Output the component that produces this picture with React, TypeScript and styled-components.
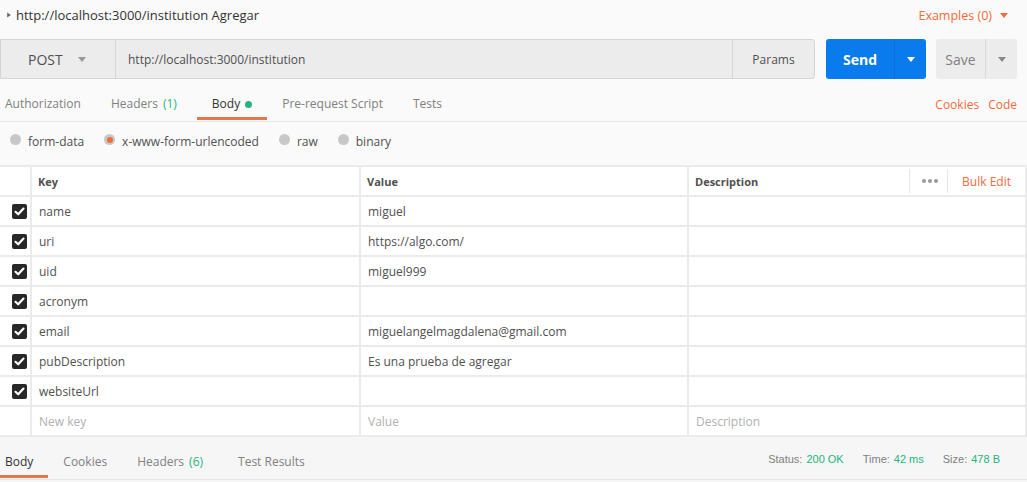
import { FC, Fragment } from "react";
import styled, { createGlobalStyle } from "styled-components";

const GlobalStyle = createGlobalStyle`
  body {
    margin: 0;
    background: #fafafa;
    font-family: "Open Sans", "Liberation Sans", sans-serif;
    color: #505050;
  }
`;

const ORANGE = "#f26b3a";
const GREEN = "#26b47f";

const Page = styled.div`
  width: 1027px;
  height: 482px;
  overflow: hidden;
  background: #fafafa;
`;

const TitleRow = styled.div`
  height: 30px;
  display: flex;
  align-items: center;
  justify-content: space-between;
  padding: 0 18px 0 6px;
`;

const Title = styled.div`
  display: flex;
  align-items: center;
  gap: 4px;
  font-size: 13px;
  color: #333;
`;

const Caret: FC<{ dir?: "right" | "down"; color: string; size?: number }> = ({
  dir = "down",
  color,
  size = 5,
}) => (
  <svg width={size * 2} height={size * 2} viewBox="0 0 10 10">
    {dir === "down" ? (
      <path d="M1 3 L9 3 L5 8 Z" fill={color} />
    ) : (
      <path d="M2 1 L8 5 L2 9 Z" fill={color} />
    )}
  </svg>
);

const Examples = styled.div`
  display: flex;
  align-items: center;
  gap: 7px;
  font-size: 12.5px;
  color: ${ORANGE};
`;

const UrlRow = styled.div`
  margin-top: 9px;
  height: 40px;
  display: flex;
  align-items: stretch;
  padding-right: 10px;
`;

const UrlGroup = styled.div`
  display: flex;
  width: 815px;
  border: 1px solid #d4d4d4;
  border-radius: 0 3px 3px 0;
  background: #ececec;
  box-sizing: border-box;
`;

const Method = styled.div`
  width: 115px;
  display: flex;
  align-items: center;
  gap: 14px;
  padding-left: 27px;
  box-sizing: border-box;
  border-right: 1px solid #d4d4d4;
  font-size: 14px;
  color: #505050;
`;

const UrlInput = styled.div`
  flex: 1;
  display: flex;
  align-items: center;
  padding-left: 12px;
  font-size: 12px;
  color: #505050;
`;

const Params = styled.div`
  width: 81px;
  display: flex;
  align-items: center;
  justify-content: center;
  border-left: 1px solid #d4d4d4;
  font-size: 12px;
  color: #505050;
`;

const SplitButton = styled.div<{ $primary?: boolean }>`
  margin-left: ${(p) => (p.$primary ? "11px" : "10px")};
  width: ${(p) => (p.$primary ? "100px" : "81px")};
  display: flex;
  border-radius: 3px;
  background: ${(p) => (p.$primary ? "#097bed" : "#ececec")};
  color: ${(p) => (p.$primary ? "#fff" : "#808080")};
  font-size: 14px;
  font-weight: ${(p) => (p.$primary ? 700 : 400)};
`;

const SplitMain = styled.div<{ $primary?: boolean }>`
  flex: 1;
  display: flex;
  align-items: center;
  justify-content: center;
  border-right: 1px solid ${(p) => (p.$primary ? "#0a6fd6" : "#d8d8d8")};
`;

const SplitCaret = styled.div`
  width: 31px;
  display: flex;
  align-items: center;
  justify-content: center;
`;

const Tabs = styled.div`
  height: 43px;
  box-sizing: border-box;
  display: flex;
  align-items: stretch;
  justify-content: space-between;
  border-bottom: 1px solid #e6e6e6;
  padding-right: 10px;
`;

const TabList = styled.div`
  display: flex;
  align-items: stretch;
`;

const Tab = styled.div<{ $active?: boolean; $first?: boolean; $wide?: boolean }>`
  position: relative;
  display: flex;
  align-items: flex-start;
  gap: 5px;
  padding: 16px ${(p) => (p.$wide ? 20 : 15)}px 0 ${(p) => (p.$first ? 5 : 15)}px;
  font-size: 12px;
  line-height: 17px;
  color: ${(p) => (p.$active ? "#333" : "#808080")};
  &::after {
    content: "";
    display: ${(p) => (p.$active ? "block" : "none")};
    position: absolute;
    left: 0;
    right: 0;
    bottom: 1px;
    height: 3px;
    background: #e5764a;
  }
`;

const Count = styled.span`
  color: ${GREEN};
  margin-left: 5px;
`;

const Dot = styled.span`
  width: 7px;
  height: 7px;
  border-radius: 50%;
  background: ${GREEN};
  margin-top: 6px;
`;

const Links = styled.div`
  display: flex;
  align-items: center;
  padding-top: 9px;
  gap: 9px;
  font-size: 12px;
  color: ${ORANGE};
`;

const RadioRow = styled.div`
  height: 43px;
  box-sizing: border-box;
  display: flex;
  align-items: center;
  padding: 0 0 4px 10px;
  gap: 20px;
`;

const Radio = styled.label`
  display: flex;
  align-items: center;
  gap: 7px;
  font-size: 12px;
  color: #505050;
`;

const RadioDot = styled.span<{ $on?: boolean }>`
  width: 11px;
  height: 11px;
  border-radius: 50%;
  background: #c8c8c8;
  display: flex;
  align-items: center;
  justify-content: center;
  margin-top: -4px;
  &::after {
    content: "";
    display: ${(p) => (p.$on ? "block" : "none")};
    width: 6px;
    height: 6px;
    border-radius: 50%;
    background: ${ORANGE};
  }
`;

const Table = styled.div`
  display: grid;
  grid-template-columns: 30px 327px 326px 1fr;
  grid-auto-rows: 28px;
  gap: 2px;
  padding: 2px 2px 2px 0;
  background: #ebebeb;
`;

const Cell = styled.div<{ $head?: boolean; $placeholder?: boolean }>`
  background: #fff;
  display: flex;
  align-items: center;
  padding-left: ${(p) => (p.$head ? "6px" : "7px")};
  font-size: ${(p) => (p.$head ? "11px" : "12px")};
  font-weight: ${(p) => (p.$head ? 700 : 400)};
  color: ${(p) => (p.$placeholder ? "#b0b0b0" : "#505050")};
`;

const CheckCell = styled.div`
  background: #fff;
  display: flex;
  align-items: center;
  justify-content: flex-end;
  padding-right: 3px;
`;

const DescHead = styled(Cell)`
  padding-right: 14px;
  justify-content: space-between;
`;

const HeadTools = styled.div`
  display: flex;
  align-items: stretch;
  height: 24px;
  font-weight: 400;
`;

const More = styled.div`
  display: flex;
  align-items: center;
  gap: 2px;
  padding: 0 9px 0 12px;
  border-left: 1px solid #e6e6e6;
  border-right: 1px solid #e6e6e6;
`;

const MoreDot = styled.span`
  width: 4px;
  height: 4px;
  border-radius: 50%;
  background: #999;
`;

const BulkEdit = styled.div`
  display: flex;
  align-items: center;
  padding-left: 14px;
  color: ${ORANGE};
  font-size: 12px;
`;

const Check: FC = () => (
  <svg width="15" height="15" viewBox="0 0 15 15">
    <rect x="0" y="0" width="15" height="15" rx="2" fill="#282828" />
    <path
      d="M3.5 7.8 L6.2 10.3 L11.5 4.6"
      stroke="#fff"
      strokeWidth="2.2"
      fill="none"
      strokeLinecap="round"
      strokeLinejoin="round"
    />
  </svg>
);

const Response = styled.div`
  background: #f6f6f6;
  height: 45px;
`;

const Stats = styled.div`
  display: flex;
  align-items: center;
  padding: 2px 17px 0 0;
  gap: 19px;
  font-family: "Liberation Sans", Arial, sans-serif;
  font-size: 11px;
  color: #808080;
`;

const Stat = styled.span`
  & b {
    font-weight: 400;
    color: ${GREEN};
    margin-left: 4px;
  }
`;

const rows: [string, string][] = [
  ["name", "miguel"],
  ["uri", "https://algo.com/"],
  ["uid", "miguel999"],
  ["acronym", ""],
  ["email", "miguelangelmagdalena@gmail.com"],
  ["pubDescription", "Es una prueba de agregar"],
  ["websiteUrl", ""],
];

const App = () => {
  return (
    <Page>
      <GlobalStyle />
      <TitleRow>
        <Title>
          <Caret dir="right" color="#666" size={3} />
          http://localhost:3000/institution Agregar
        </Title>
        <Examples>
          Examples (0)
          <Caret color={ORANGE} size={5} />
        </Examples>
      </TitleRow>

      <UrlRow>
        <UrlGroup>
          <Method>
            POST
            <Caret color="#999" size={5} />
          </Method>
          <UrlInput>http://localhost:3000/institution</UrlInput>
          <Params>Params</Params>
        </UrlGroup>
        <SplitButton $primary>
          <SplitMain $primary>Send</SplitMain>
          <SplitCaret>
            <Caret color="#fff" size={5} />
          </SplitCaret>
        </SplitButton>
        <SplitButton>
          <SplitMain>Save</SplitMain>
          <SplitCaret>
            <Caret color="#888" size={5} />
          </SplitCaret>
        </SplitButton>
      </UrlRow>

      <Tabs>
        <TabList>
          <Tab $first>Authorization</Tab>
          <Tab $wide>
            <span>
              Headers<Count>(1)</Count>
            </span>
          </Tab>
          <Tab $active>
            Body <Dot />
          </Tab>
          <Tab>Pre-request Script</Tab>
          <Tab>Tests</Tab>
        </TabList>
        <Links>
          <span>Cookies</span>
          <span>Code</span>
        </Links>
      </Tabs>

      <RadioRow>
        <Radio>
          <RadioDot /> form-data
        </Radio>
        <Radio>
          <RadioDot $on /> x-www-form-urlencoded
        </Radio>
        <Radio>
          <RadioDot /> raw
        </Radio>
        <Radio>
          <RadioDot /> binary
        </Radio>
      </RadioRow>

      <Table>
        <CheckCell />
        <Cell $head>Key</Cell>
        <Cell $head>Value</Cell>
        <DescHead $head>
          Description
          <HeadTools>
            <More>
              <MoreDot />
              <MoreDot />
              <MoreDot />
            </More>
            <BulkEdit>Bulk Edit</BulkEdit>
          </HeadTools>
        </DescHead>
        {rows.map(([k, v]) => (
          <Fragment key={k}>
            <CheckCell>
              <Check />
            </CheckCell>
            <Cell>{k}</Cell>
            <Cell>{v}</Cell>
            <Cell />
          </Fragment>
        ))}
        <CheckCell />
        <Cell $placeholder>New key</Cell>
        <Cell $placeholder>Value</Cell>
        <Cell $placeholder>Description</Cell>
      </Table>

      <Response>
        <Tabs>
          <TabList>
            <Tab $first $active>
              Body
            </Tab>
            <Tab>Cookies</Tab>
            <Tab $wide>
              <span>
                Headers<Count>(6)</Count>
              </span>
            </Tab>
            <Tab>Test Results</Tab>
          </TabList>
          <Stats>
            <Stat>
              Status:<b>200 OK</b>
            </Stat>
            <Stat>
              Time:<b>42 ms</b>
            </Stat>
            <Stat>
              Size:<b>478 B</b>
            </Stat>
          </Stats>
        </Tabs>
      </Response>
    </Page>
  );
};

export default App;
